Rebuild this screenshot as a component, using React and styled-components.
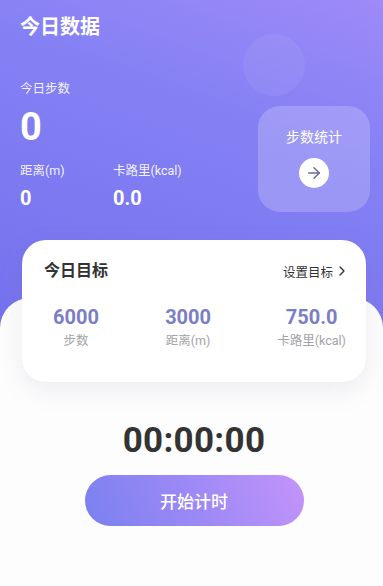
import React from 'react';
import styled, { createGlobalStyle } from 'styled-components';
import { ArrowRight, ChevronRight } from 'lucide-react';

const GlobalStyle = createGlobalStyle`
  html, body {
    margin: 0;
    padding: 0;
    background: #fdfdfd;
  }
  * {
    box-sizing: border-box;
  }
  body {
    font-family: Roboto, "Noto Sans CJK SC", sans-serif;
  }
`;

const Page = styled.div`
  width: 383px;
  min-height: 586px;
  background: #fdfdfd;
  overflow: hidden;
`;

const Header = styled.div`
  position: relative;
  height: 328px;
  padding: 13px 13px 0 20px;
  background: linear-gradient(200deg, #9e8af8 0%, #8581f4 35%, #7471ee 100%);
  overflow: hidden;
`;

const Bubble = styled.div`
  position: absolute;
  left: 243px;
  top: 34px;
  width: 62px;
  height: 62px;
  border-radius: 50%;
  background: rgba(255, 255, 255, 0.06);
`;

const Title = styled.h1`
  margin: 0;
  font-size: 20px;
  line-height: 28px;
  font-weight: 700;
  color: #fff;
`;

const StatsRow = styled.div`
  display: flex;
  justify-content: space-between;
  align-items: flex-start;
  margin-top: 39px;
`;

const StatsCol = styled.div`
  display: flex;
  flex-direction: column;
  color: #fff;
`;

const Label = styled.div`
  font-size: 12.5px;
  line-height: 18px;
  color: rgba(255, 255, 255, 0.92);
`;

const BigValue = styled.div`
  margin-top: 9px;
  font-size: 38px;
  line-height: 40px;
  font-weight: 700;
`;

const SubRow = styled.div`
  display: flex;
  margin-top: 15px;
`;

const SubItem = styled.div`
  width: 93px;
`;

const SubValue = styled.div`
  margin-top: 6px;
  font-size: 20px;
  line-height: 24px;
  font-weight: 700;
`;

const StepCard = styled.div`
  width: 112px;
  height: 106px;
  margin-top: 26px;
  border-radius: 22px;
  background: rgba(255, 255, 255, 0.2);
  display: flex;
  flex-direction: column;
  align-items: center;
  padding-top: 21px;
  gap: 11px;
`;

const StepCardText = styled.div`
  font-size: 14px;
  line-height: 20px;
  color: #fff;
`;

const ArrowCircle = styled.div`
  width: 30px;
  height: 30px;
  border-radius: 50%;
  background: #fff;
  display: flex;
  align-items: center;
  justify-content: center;
  color: #676a9c;
`;

const Sheet = styled.div`
  position: relative;
  margin-top: -30px;
  background: #fdfdfd;
  border-radius: 30px 30px 0 0;
  padding: 0 17px 0 22px;
  display: flex;
  flex-direction: column;
  align-items: center;
`;

const GoalCard = styled.div`
  width: 344px;
  height: 142px;
  margin-top: -58px;
  background: #fff;
  border-radius: 24px;
  box-shadow: 0 8px 24px rgba(120, 120, 160, 0.13);
  padding: 18px 16px 0 22px;
  align-self: flex-start;
`;

const GoalHead = styled.div`
  display: flex;
  justify-content: space-between;
  align-items: center;
`;

const GoalTitle = styled.div`
  font-size: 16px;
  line-height: 26px;
  font-weight: 600;
  color: #333;
`;

const GoalLink = styled.div`
  display: flex;
  align-items: center;
  gap: 1px;
  font-size: 12.5px;
  color: #333;
`;

const GoalRow = styled.div`
  display: flex;
  justify-content: space-between;
  margin-top: 21px;
  padding: 0 4px 0 9px;
`;

const GoalItem = styled.div`
  display: flex;
  flex-direction: column;
  align-items: center;
`;

const GoalValue = styled.div`
  font-size: 20px;
  line-height: 24px;
  font-weight: 700;
  color: #7b7ec6;
`;

const GoalLabel = styled.div`
  margin-top: 3px;
  font-size: 12.5px;
  line-height: 18px;
  color: #a3a3a8;
`;

const Timer = styled.div`
  margin-top: 39px;
  font-size: 35px;
  line-height: 40px;
  font-weight: 700;
  color: #333;
  letter-spacing: 0.3px;
`;

const StartButton = styled.button`
  margin-top: 14px;
  width: 219px;
  height: 51px;
  border: none;
  border-radius: 26px;
  background: linear-gradient(65deg, #7a80f0 0%, #a08af6 55%, #c494fa 100%);
  color: #fff;
  font-family: Roboto, "Noto Sans CJK SC", sans-serif;
  font-size: 17px;
  font-weight: 500;
`;

const goals = [
  { value: '6000', label: '步数' },
  { value: '3000', label: '距离(m)' },
  { value: '750.0', label: '卡路里(kcal)' },
];

const App = () => {
  return (
    <Page>
      <GlobalStyle />
      <Header>
        <Bubble />
        <Title>今日数据</Title>
        <StatsRow>
          <StatsCol>
            <Label>今日步数</Label>
            <BigValue>0</BigValue>
            <SubRow>
              <SubItem>
                <Label>距离(m)</Label>
                <SubValue>0</SubValue>
              </SubItem>
              <SubItem>
                <Label>卡路里(kcal)</Label>
                <SubValue>0.0</SubValue>
              </SubItem>
            </SubRow>
          </StatsCol>
          <StepCard>
            <StepCardText>步数统计</StepCardText>
            <ArrowCircle>
              <ArrowRight size={18} strokeWidth={2} />
            </ArrowCircle>
          </StepCard>
        </StatsRow>
      </Header>
      <Sheet>
        <GoalCard>
          <GoalHead>
            <GoalTitle>今日目标</GoalTitle>
            <GoalLink>
              设置目标
              <ChevronRight size={16} strokeWidth={2} />
            </GoalLink>
          </GoalHead>
          <GoalRow>
            {goals.map(g => (
              <GoalItem key={g.label}>
                <GoalValue>{g.value}</GoalValue>
                <GoalLabel>{g.label}</GoalLabel>
              </GoalItem>
            ))}
          </GoalRow>
        </GoalCard>
        <Timer>00:00:00</Timer>
        <StartButton>开始计时</StartButton>
      </Sheet>
    </Page>
  );
};

export default App;
